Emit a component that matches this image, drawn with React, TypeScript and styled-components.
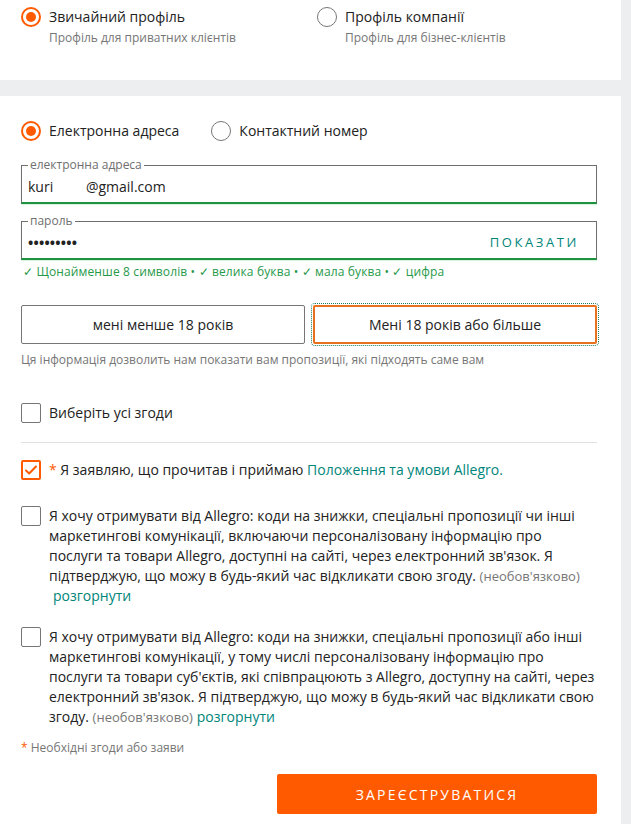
import styled, { createGlobalStyle, css } from 'styled-components'

const GlobalStyle = createGlobalStyle`
  * { box-sizing: border-box; }
  body {
    margin: 0;
    background: #eceef0;
    font-family: "Open Sans", "Noto Sans", sans-serif;
    color: #222;
  }
`

const Page = styled.div`
  width: 621px;
  display: flex;
  flex-direction: column;
  gap: 16px;
`

const Card = styled.section<{ $top?: boolean }>`
  background: #fff;
  padding: ${({ $top }) => ($top ? '7px 24px 34px 21px' : '25px 24px 10px 21px')};
`

const ProfileGrid = styled.div`
  display: grid;
  grid-template-columns: 296px 1fr;
`

const Option = styled.label`
  display: flex;
  flex-direction: column;
  gap: 3px;
`

const RadioRow = styled.span`
  display: flex;
  align-items: center;
  gap: 8px;
  font-size: 14px;
  line-height: 20px;
`

const Radio = styled.span<{ $on?: boolean }>`
  width: 20px;
  height: 20px;
  flex: none;
  border-radius: 50%;
  border: 1px solid #767676;
  display: inline-flex;
  align-items: center;
  justify-content: center;
  ${({ $on }) =>
    $on &&
    css`
      border: 2px solid #ff5a00;
      &::after {
        content: '';
        width: 10px;
        height: 10px;
        border-radius: 50%;
        background: #ff5a00;
      }
    `}
`

const Hint = styled.span`
  padding-left: 28px;
  font-size: 12px;
  line-height: 16px;
  color: #767676;
`

const ContactChoice = styled.div`
  display: flex;
  gap: 32px;
`

const Field = styled.fieldset<{ $gap: number }>`
  margin: ${({ $gap }) => $gap}px 0 0;
  padding: 0 8px 2px 6px;
  border: 1px solid #6f6f6f;
  border-bottom: 2px solid #1f9342;
  box-shadow: 0 1px 1px #d6f3dc;
  display: flex;
  align-items: center;
`

const Legend = styled.legend`
  padding: 0 2px;
  font-size: 12px;
  line-height: 14px;
  color: #6f6f6f;
`

const Value = styled.span<{ $dots?: boolean }>`
  flex: 1;
  height: 28px;
  display: flex;
  align-items: center;
  font-size: 14px;
  letter-spacing: ${({ $dots }) => ($dots ? '0.2px' : '0')};
  font-weight: ${({ $dots }) => ($dots ? 700 : 400)};
  white-space: pre;
`

const Show = styled.button`
  border: 0;
  background: none;
  padding: 0 9px 0 0;
  font: inherit;
  font-size: 13px;
  letter-spacing: 2.6px;
  color: #00857a;
`

const Rules = styled.p`
  margin: 5px 0 0 2px;
  font-size: 12px;
  letter-spacing: 0.13px;
  line-height: 14px;
  color: #27994a;
`

const AgeRow = styled.div`
  margin-top: 26px;
  display: grid;
  grid-template-columns: 1fr 1fr;
  gap: 8px;
`

const AgeButton = styled.button<{ $on?: boolean }>`
  height: 39px;
  background: #fff;
  font: inherit;
  font-size: 14px;
  color: #222;
  border: 1px solid #767676;
  border-radius: 2px;
  ${({ $on }) =>
    $on &&
    css`
      border: 2px solid #e8711f;
      outline: 1px dotted #1a7f5a;
      outline-offset: 1px;
    `}
`

const Note = styled.p<{ $gap: number }>`
  margin: ${({ $gap }) => $gap}px 0 0;
  font-size: 12px;
  line-height: 16px;
  color: #767676;
`

const Consent = styled.label<{ $gap: number }>`
  margin-top: ${({ $gap }) => $gap}px;
  display: flex;
  align-items: flex-start;
  gap: 8px;
  font-size: 14px;
  line-height: 20px;
`

const Box = styled.span<{ $on?: boolean }>`
  width: 20px;
  height: 20px;
  flex: none;
  border: 1px solid #767676;
  border-radius: 2px;
  display: inline-flex;
  align-items: center;
  justify-content: center;
  ${({ $on }) =>
    $on &&
    css`
      border: 2px solid #ff5a00;
    `}
`

const Divider = styled.hr`
  margin: 19px 0 0;
  border: 0;
  border-top: 1px solid #e2e2e2;
`

const Star = styled.span`
  color: #ff5a00;
`

const Link = styled.a`
  color: #00857a;
  text-decoration: none;
`

const Optional = styled.span`
  font-size: 13px;
  line-height: 18px;
  color: #767676;
`

const Expand = styled.span`
  display: inline-block;
  padding-left: 4px;
  color: #00857a;
`

const Submit = styled.button`
  align-self: flex-end;
  margin-top: 18px;
  width: 320px;
  height: 40px;
  border: 0;
  border-radius: 2px;
  background: #ff5a00;
  color: #fff;
  font: inherit;
  font-size: 14px;
  letter-spacing: 2.2px;
`

const Form = styled.div`
  display: flex;
  flex-direction: column;
`

const Check = () => (
  <svg width="14" height="14" viewBox="0 0 14 14" fill="none">
    <path d="M2 7.5l3.2 3L12 3.5" stroke="#ff5a00" strokeWidth="2" strokeLinecap="round" strokeLinejoin="round" />
  </svg>
)

export default function App() {
  return (
    <>
      <GlobalStyle />
      <Page>
        <Card $top>
          <ProfileGrid>
            <Option>
              <RadioRow>
                <Radio $on />
                Звичайний профіль
              </RadioRow>
              <Hint>Профіль для приватних клієнтів</Hint>
            </Option>
            <Option>
              <RadioRow>
                <Radio />
                Профіль компанії
              </RadioRow>
              <Hint>Профіль для бізнес-клієнтів</Hint>
            </Option>
          </ProfileGrid>
        </Card>

        <Card>
          <Form>
            <ContactChoice>
              <RadioRow>
                <Radio $on />
                Електронна адреса
              </RadioRow>
              <RadioRow>
                <Radio />
                Контактний номер
              </RadioRow>
            </ContactChoice>

            <Field $gap={17}>
              <Legend>електронна адреса</Legend>
              <Value>{'kuri         @gmail.com'}</Value>
            </Field>

            <Field $gap={10}>
              <Legend>пароль</Legend>
              <Value $dots>•••••••••</Value>
              <Show type="button">ПОКАЗАТИ</Show>
            </Field>

            <Rules>✓ Щонайменше 8 символів • ✓ велика буква • ✓ мала буква • ✓ цифра</Rules>

            <AgeRow>
              <AgeButton type="button">мені менше 18 років</AgeButton>
              <AgeButton type="button" $on>
                Мені 18 років або більше
              </AgeButton>
            </AgeRow>
            <Note $gap={8}>Ця інформація дозволить нам показати вам пропозиції, які підходять саме вам</Note>

            <Consent $gap={35}>
              <Box />
              <span>Виберіть усі згоди</span>
            </Consent>
            <Divider />

            <Consent $gap={17}>
              <Box $on>
                <Check />
              </Box>
              <span>
                <Star>*</Star> Я заявляю, що прочитав і приймаю <Link>Положення та умови Allegro.</Link>
              </span>
            </Consent>

            <Consent $gap={26}>
              <Box />
              <span>
                Я хочу отримувати від Allegro: коди на знижки, спеціальні пропозиції чи інші маркетингові
                комунікації, включаючи персоналізовану інформацію про послуги та товари Allegro, доступні на
                сайті, через електронний зв'язок. Я підтверджую, що можу в будь-який час відкликати свою згоду.{' '}
                <Optional>(необов'язково)</Optional>
                <Expand>розгорнути</Expand>
              </span>
            </Consent>

            <Consent $gap={21}>
              <Box />
              <span>
                Я хочу отримувати від Allegro: коди на знижки, спеціальні пропозиції або інші маркетингові
                комунікації, у тому числі персоналізовану інформацію про послуги та товари суб'єктів, які
                співпрацюють з Allegro, доступну на сайті, через електронний зв'язок. Я підтверджую, що можу в
                будь-який час відкликати свою згоду. <Optional>(необов'язково)</Optional>
                <Expand>розгорнути</Expand>
              </span>
            </Consent>

            <Note $gap={13}>
              <Star>*</Star> Необхідні згоди або заяви
            </Note>

            <Submit type="button">ЗАРЕЄСТРУВАТИСЯ</Submit>
          </Form>
        </Card>
      </Page>
    </>
  )
}
